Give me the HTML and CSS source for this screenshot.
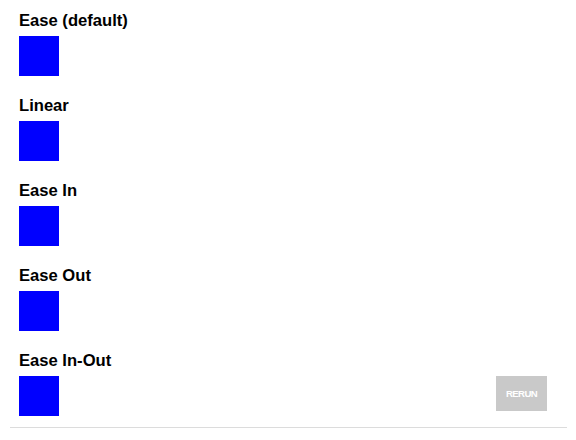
FILE: index.html
```html
<!DOCTYPE html>
<html>
<head>
<meta charset="utf-8">
<link rel="stylesheet" href="styles.css">
</head>
<body>
<div class="page">
  <div class="stage">
    <div class="list">
      <section class="demo">
        <h3 class="title">Ease (default)</h3>
        <div class="box"></div>
      </section>
      <section class="demo">
        <h3 class="title">Linear</h3>
        <div class="box"></div>
      </section>
      <section class="demo">
        <h3 class="title">Ease In</h3>
        <div class="box"></div>
      </section>
      <section class="demo">
        <h3 class="title">Ease Out</h3>
        <div class="box"></div>
      </section>
      <section class="demo">
        <h3 class="title">Ease In-Out</h3>
        <div class="box"></div>
      </section>
    </div>
    <button class="rerun">RERUN</button>
  </div>
</div>
</body>
</html>
```

FILE: styles.css
```css
html, body {
  margin: 0;
  padding: 0;
  background: #ffffff;
}
body {
  font-family: "Liberation Sans", Arial, Helvetica, sans-serif;
  color: #000;
}
.page {
  margin: 0 9px 0 10px;
  border-bottom: 1px solid #dcdcdc;
  padding-bottom: 11px;
}
.stage {
  display: flex;
  justify-content: space-between;
  align-items: flex-end;
}
.list {
  display: flex;
  flex-direction: column;
  gap: 21px;
  padding-left: 9px;
  padding-top: 12px;
}
.demo {
  display: flex;
  flex-direction: column;
  gap: 6px;
}
.title {
  margin: 0;
  font-size: 16.6px;
  line-height: 18px;
  font-weight: bold;
}
.box {
  width: 40px;
  height: 40px;
  background: #0000ff;
}
.rerun {
  width: 51px;
  height: 35px;
  margin: 0 20px 5px 0;
  padding: 0;
  border: none;
  background: #c9c9c9;
  color: #ffffff;
  font-family: "Liberation Sans", Arial, sans-serif;
  font-weight: bold;
  font-size: 9.6px;
  letter-spacing: -0.6px;
}
```
